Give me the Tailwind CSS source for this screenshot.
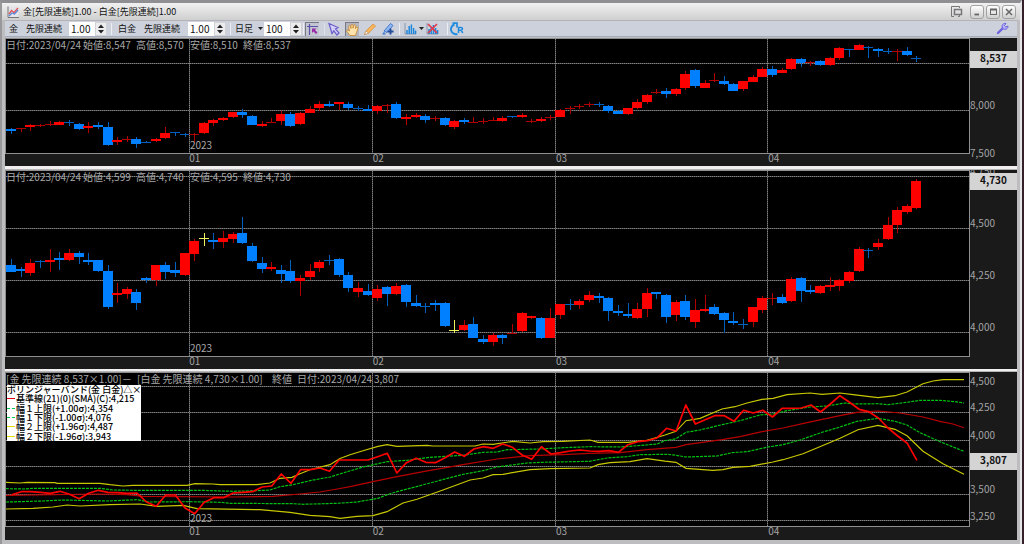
<!DOCTYPE html>
<html lang="ja">
<head>
  <meta charset="UTF-8">
  <title>金[先限連続]1.00 - 白金[先限連続]1.00</title>
  <meta name="viewport" content="width=device-width, initial-scale=1.0">
  <script src="https://cdn.jsdelivr.net/npm/@tailwindcss/browser@4"></script>
</head>
<body class="bg-[#35202a] min-h-screen pr-[2px] font-['Noto_Sans_CJK_JP',sans-serif] text-[10px] leading-[12px]">

  <div class="min-h-screen flex flex-col bg-[#bdbdc0] border-t-[3px] border-t-[#8e8e93] border-l-2 border-l-[#98989a] border-r-2 border-r-[#e6e6e8] pl-[3px] pr-[3px]">

    <!-- title bar -->
    <header class="h-[17px] -mx-[3px] pl-[5px] pr-1 flex items-center bg-linear-to-b from-[#f1f1f1] to-[#cfcfd0] text-[#111]">
      <svg class="w-3 h-3 mr-1" viewBox="0 0 12 12" fill="none">
        <rect x="0.5" y="0.5" width="11" height="11" fill="#e4e4e8" />
        <path d="M1 0.5V11.5H12" stroke="#777" />
        <path d="M2 8L4.500 4.500L7 6.500L11 2" stroke="#e0555c" stroke-width="1.300" />
        <path d="M2 10L5 7L7.500 8L11 4" stroke="#5b86d8" stroke-width="1.300" />
      </svg>
      <h1 class="text-[9px] whitespace-nowrap">金[先限連続]1.00 - 白金[先限連続]1.00</h1>
      <div class="ml-auto flex items-center gap-[2px]">
        <button aria-label="ウィンドウ切替" class="w-[14px] h-[14px] mr-1">
          <svg class="w-[14px] h-[14px]" viewBox="0 0 14 14" fill="none" stroke="#77777a">
            <path d="M9.500 3V1.500H1.500V11.500H4" /><path d="M8 11.500H9.500V10" /><rect x="4.500" y="4.500" width="7" height="5" stroke-width="1.500" />
          </svg>
        </button>
        <button aria-label="最小化" class="w-[14px] h-[14px] rounded-[3px] border border-[#a2a2a5] bg-linear-to-b from-white to-[#cfcfcf]">
          <svg class="w-3 h-3" viewBox="0 0 12 12"><path d="M3.500 8.500H8" stroke="#666" stroke-width="1.800" /></svg>
        </button>
        <button aria-label="最大化" class="w-[14px] h-[14px] rounded-[3px] border border-[#a2a2a5] bg-linear-to-b from-white to-[#cfcfcf]">
          <svg class="w-3 h-3" viewBox="0 0 12 12" fill="none" stroke="#666"><rect x="3.500" y="3.500" width="6" height="5" /><path d="M3 3.500H10" stroke-width="2" /></svg>
        </button>
        <button aria-label="閉じる" class="w-[14px] h-[14px] rounded-[3px] border border-[#a2a2a5] bg-linear-to-b from-white to-[#cfcfcf]">
          <svg class="w-3 h-3" viewBox="0 0 12 12"><path d="M3 3L9 9M9 3L3 9" stroke="#666" stroke-width="1.500" /></svg>
        </button>
      </div>
    </header>

    <!-- toolbar -->
    <div class="h-[17px] flex items-center bg-[#cdd1dc] border-t border-t-[#b4b4b8] border-b border-b-[#a3adbf] pl-1 pr-1 text-[9px] text-[#111] whitespace-nowrap">
      <label for="ratio1" class="flex w-[60px] gap-2"><span>金</span><span>先限連続</span></label>
      <div class="w-[38px] h-[14px] flex bg-white">
        <input id="ratio1" type="text" value="1.00" class="w-[26px] pl-[2px] text-[10px] leading-[14px]">
        <button aria-label="増減" class="w-3 bg-[#ececee] border border-[#d2d2d6] flex items-center justify-center">
          <svg class="w-2 h-3" viewBox="0 0 8 12"><path d="M4 1.500L7 5H1ZM4 10.500L7 7H1Z" fill="#222" /></svg>
        </button>
      </div>
      <div class="w-px h-3 mx-1 bg-[#eceef3]"></div>
      <label for="ratio2" class="flex w-[70px] gap-2 ml-[2px]"><span>白金</span><span>先限連続</span></label>
      <div class="w-[38px] h-[14px] flex bg-white">
        <input id="ratio2" type="text" value="1.00" class="w-[26px] pl-[2px] text-[10px] leading-[14px]">
        <button aria-label="増減" class="w-3 bg-[#ececee] border border-[#d2d2d6] flex items-center justify-center">
          <svg class="w-2 h-3" viewBox="0 0 8 12"><path d="M4 1.500L7 5H1ZM4 10.500L7 7H1Z" fill="#222" /></svg>
        </button>
      </div>
      <div class="w-px h-3 mx-1 bg-[#eceef3]"></div>
      <select aria-label="足種" class="appearance-none w-[22px] text-[9px] leading-[14px]"><option>日足</option></select>
      <svg class="w-[5px] h-[5px] mx-px" viewBox="0 0 5 5"><path d="M0 1H5L2.500 4Z" fill="#222" /></svg>
      <div class="w-[38px] h-[14px] flex bg-white">
        <input aria-label="本数" type="text" value="100" class="w-[26px] pl-[2px] text-[10px] leading-[14px]">
        <button aria-label="増減" class="w-3 bg-[#ececee] border border-[#d2d2d6] flex items-center justify-center">
          <svg class="w-2 h-3" viewBox="0 0 8 12"><path d="M4 1.500L7 5H1ZM4 10.500L7 7H1Z" fill="#222" /></svg>
        </button>
      </div>
      <div class="w-px h-3 mx-px bg-[#eceef3]"></div>
      <button aria-label="十字カーソル" class="w-[14px] h-[14px] bg-[#c3c6d0] border-t border-l border-[#777a84]">
        <svg class="w-[13px] h-[13px]" viewBox="0 0 13 13" fill="none">
          <path d="M1 3.500H12M3.500 1V12" stroke="#5a52a8" stroke-width="1.200" />
          <path d="M6 5.500H10.500L9 7L11.500 9.500L10 11L7.500 8.500L6 10Z" fill="#9a2aa8" />
        </svg>
      </button>
      <div class="w-px h-3 ml-[5px] mr-[2px] bg-[#dfe2ea]"></div>
      <button aria-label="選択" class="w-[14px] h-[14px]">
        <svg class="w-[14px] h-[14px]" viewBox="0 0 14 14"><path d="M2 1.500L11 5.500L8.500 7L12 11L10 13L6.800 8.800L5 11.500Z" fill="#d5d0fa" stroke="#6a5cc8" stroke-width="1.200" /></svg>
      </button>
      <button aria-label="移動" class="w-[14px] h-[14px] ml-1 bg-[#b2b5bd] border-t border-l border-[#777a84]">
        <svg class="w-[13px] h-[13px]" viewBox="0 0 13 13"><path d="M4 12.500L1 8.500Q0 6.500 2 7L3.500 8L2.500 3.500Q3 2 4.200 3.200L5 5.500V1.800Q6 0.300 7 1.800V5.200L8 2.200Q9.200 1.200 9.800 2.600L9.300 5.800L11 4Q12.400 3.800 12 5.300L10.500 9.500L9.500 12.500Z" fill="#ffe3ac" stroke="#c98d3b" stroke-width="0.900" /></svg>
      </button>
      <button aria-label="鉛筆" class="w-[14px] h-[14px] ml-1">
        <svg class="w-[14px] h-[14px]" viewBox="0 0 14 14"><path d="M1.500 12.500L3 9L10 2L12.500 4L5.500 11.200Z" fill="#f7b65c" stroke="#d9913a" stroke-width="0.800" /><path d="M1.500 12.500L3 9L5.500 11.200Z" fill="#fff" stroke="#b98850" stroke-width="0.600" /></svg>
      </button>
      <button aria-label="ペン追加" class="w-[14px] h-[14px] ml-1">
        <svg class="w-[14px] h-[14px]" viewBox="0 0 14 14"><path d="M3 9L9.500 1.500L12 3.500L6 10.500Z" fill="#8db8f2" stroke="#3b6fc8" stroke-width="0.900" /><path d="M1 12.500H5L3 9.500Z" fill="#4a7fd0" /><path d="M9.500 6.500V12.500M6.500 9.500H12.500" stroke="#244d9c" stroke-width="1.900" /></svg>
      </button>
      <div class="w-px h-3 mx-1 bg-[#eceef3]"></div>
      <button aria-label="テクニカル" class="h-[14px] flex items-center">
        <svg class="w-[13px] h-[13px]" viewBox="0 0 13 13"><path d="M1 1V12H12" fill="none" stroke="#8b95a8" /><path d="M3 12V8M5.200 12V4M7.400 12V2.500M9.600 12V6M11.600 12V8.500" stroke="#1d86dd" stroke-width="1.500" /></svg>
        <svg class="w-[5px] h-[5px] ml-[2px]" viewBox="0 0 5 5"><path d="M0 1H5L2.500 4Z" fill="#222" /></svg>
      </button>
      <button aria-label="テクニカル削除" class="w-[13px] h-[14px] ml-[2px]">
        <svg class="w-[13px] h-[13px]" viewBox="0 0 13 13"><path d="M1 1V12H12" fill="none" stroke="#8b95a8" /><path d="M3 12V7M5.200 12V5M7.400 12V3M9.600 12V6M11.600 12V8" stroke="#1d86dd" stroke-width="1.500" /><path d="M2 2L11 11M11 2L2 11" stroke="#e0394a" stroke-width="1.700" /></svg>
      </button>
      <div class="w-px h-3 ml-2 mr-[2px] bg-[#eceef3]"></div>
      <button aria-label="更新" class="w-[14px] h-[14px]">
        <svg class="w-[14px] h-[14px]" viewBox="0 0 14 14" fill="none" stroke="#1f8be0"><path d="M4.500 2.500A4.800 4.800 0 0 0 7.500 12" stroke-width="1.900" /><path d="M2.500 1.200H7V5.500" stroke-width="1.700" /><path d="M8.500 11V5.500H11Q12.500 5.500 12.500 6.800T11 8.200H9M11 8.200L12.800 11" stroke-width="1.500" /></svg>
      </button>
      <button aria-label="設定" class="w-[13px] h-[14px] ml-auto mr-1">
        <svg class="w-[13px] h-[13px]" viewBox="0 0 13 13"><path d="M2 11L7 6" stroke="#6b62e0" stroke-width="2.400" stroke-linecap="round" /><path d="M10 1.500A3 3 0 1 0 12 4L9.800 5L8.300 3.600Z" fill="#b9b3f8" stroke="#6b62e0" stroke-width="1" /></svg>
      </button>
    </div>

    <main class="pt-px flex flex-col text-[#a8a8a8]">

      <!-- gold -->
      <section class="grid grid-cols-[minmax(0,1fr)_47px] bg-[#1a1a1a]">
        <div class="relative h-[116px] bg-black border border-[#8f8f8f]">
          <svg id="gold" class="block w-full h-full" viewBox="6 39 963 114" preserveAspectRatio="none"></svg>
          <div class="absolute left-0 top-0 flex whitespace-nowrap">
            <span class="w-[77px]">日付:2023/04/24</span><span class="w-[53px]">始値:8,547</span><span class="w-[54px]">高値:8,570</span><span class="w-[53px]">安値:8,510</span><span>終値:8,537</span>
          </div>
          <span class="absolute left-[19.1%] bottom-[2px]">2023</span>
        </div>
        <svg class="w-[47px] h-[128px] row-span-2 overflow-visible fill-[#a4a4a4]">
          <text x="0" y="71">8,000</text><text x="0" y="119">7,500</text>
          <rect x="0" y="13" width="47" height="17" fill="#d4d4d4" />
          <text x="10" y="24" class="fill-[#111] font-bold">8,537</text>
        </svg>
        <svg class="months w-full h-3 overflow-visible fill-[#a4a4a4]"></svg>
      </section>

      <div class="h-1 bg-[#f1eff0] border-b border-b-[#b5b5b8]"></div>

      <!-- platinum -->
      <section class="grid grid-cols-[minmax(0,1fr)_47px] bg-[#1a1a1a]">
        <div class="relative h-[187px] bg-black border border-[#8f8f8f]">
          <svg id="platinum" class="block w-full h-full" viewBox="6 171 963 185" preserveAspectRatio="none"></svg>
          <div class="absolute left-0 top-0 flex whitespace-nowrap">
            <span class="w-[77px]">日付:2023/04/24</span><span class="w-[53px]">始値:4,599</span><span class="w-[54px]">高値:4,740</span><span class="w-[53px]">安値:4,595</span><span>終値:4,730</span>
          </div>
          <span class="absolute left-[19.1%] bottom-[2px]">2023</span>
        </div>
        <svg class="w-[47px] h-[199px] row-span-2 fill-[#a4a4a4]">
          <text x="0" y="5">4,750</text><text x="0" y="57">4,500</text><text x="0" y="109">4,250</text><text x="0" y="161">4,000</text>
          <rect x="0" y="3" width="47" height="17" fill="#d4d4d4" />
          <text x="10" y="14" class="fill-[#111] font-bold">4,730</text>
        </svg>
        <svg class="months w-full h-3 overflow-visible fill-[#a4a4a4]"></svg>
      </section>

      <div class="h-[3px] bg-[#f1eff0] border-b border-b-[#b5b5b8]"></div>

      <!-- spread with bollinger bands -->
      <section class="grid grid-cols-[minmax(0,1fr)_47px] bg-[#1a1a1a]">
        <div class="relative h-[155px] bg-black border border-[#8f8f8f]">
          <svg id="spread" class="block w-full h-full" viewBox="6 373 963 153" preserveAspectRatio="none"></svg>
          <div class="absolute left-0 top-0 flex whitespace-nowrap">
            <span class="w-[131px]">[金 先限連続 8,537×1.00]－</span><span class="w-[135px]">[白金 先限連続 4,730×1.00]</span><span class="w-[25px]">終値</span><span class="w-[77px]">日付:2023/04/24</span><span>3,807</span>
          </div>
          <div class="absolute left-px top-3 w-[134px] h-[56px] bg-white text-black text-[9px] leading-[9px] font-medium grid grid-rows-6 items-center whitespace-nowrap">
            <div>ボリンジャーバンド(金 白金)△×</div>
            <div class="flex items-center gap-px"><i class="w-2 h-px bg-red-600"></i>基準線(21)(0)(SMA)(C):4,215</div>
            <div class="flex items-center gap-px"><i class="w-2 border-t border-dashed border-green-500"></i>幅１上限(+1.00σ):4,354</div>
            <div class="flex items-center gap-px"><i class="w-2 border-t border-dashed border-green-500"></i>幅１下限(-1.00σ):4,076</div>
            <div class="flex items-center gap-px"><i class="w-2 h-px bg-[#e0e000]"></i>幅２上限(+1.96σ):4,487</div>
            <div class="flex items-center gap-px"><i class="w-2 h-px bg-[#e0e000]"></i>幅２下限(-1.96σ):3,943</div>
          </div>
          <span class="absolute left-[19.1%] bottom-[2px]">2023</span>
        </div>
        <svg class="w-[47px] h-[168px] row-span-2 fill-[#a4a4a4]">
          <text x="0" y="13">4,500</text><text x="0" y="39">4,250</text><text x="0" y="67">4,000</text><text x="0" y="121">3,500</text><text x="0" y="148">3,250</text>
          <rect x="0" y="81" width="47" height="17" fill="#d4d4d4" />
          <text x="10" y="92" class="fill-[#111] font-bold">3,807</text>
        </svg>
        <svg class="months w-full h-[13px] overflow-visible fill-[#a4a4a4]"></svg>
      </section>
    </main>
  </div>

  <script>
    const NS = "http://www.w3.org/2000/svg";
    const FIRST_X = 11.7, STEP = 9.63;
    const COLORS = { R: "#ff0000", B: "#0080ff", Y: "#f0f060" };
    const WICKS = { R: "#b00000", B: "#0060c0", Y: "#f0f060" };

    // color, body top, body bottom, wick top, wick bottom
    const gold = `B129,131,128,134 R128,129,128,132 R125,127,124,131 R125,126,124,127 R124,125,121,126 R122,125,121,125 B122,123,120,126 B124,129,123,130 R126,128,122,133 B125,127,122,129
      B127,145,122,146 R140,142,137,145 R139,140,136,142 B139,144,137,148 B142,143,141,143 R139,141,138,142 R133,138,127,139 B132,133,132,136 B134,135,133,137 R134,135,133,144
      R123,133,122,134 R120,123,119,126 R118,120,117,121 R112,117,112,118 B112,115,109,118 B116,125,115,125 R124,126,121,127 R122,123,118,123 R114,121,111,125 B114,126,112,127
      R113,124,112,125 R109,113,106,113 R104,108,101,111 B104,106,101,107 R102,104,102,110 B104,108,102,110 B108,109,106,111 B109,111,105,111 R106,111,105,114 R105,106,104,113
      B104,118,102,119 R117,119,114,125 R115,117,113,118 B116,120,114,123 R118,119,116,121 B118,125,117,126 R121,127,120,129 B120,122,118,124 R122,123,117,123 R121,122,118,124
      R120,121,117,121 R118,121,116,122 B116,117,116,118 R115,117,113,118 R121,122,119,123 R119,121,117,122 R117,118,115,120 R110,117,109,117 R108,109,106,114 R106,107,104,109
      R104,105,102,107 B104,105,102,107 B106,111,105,113 B111,114,110,114 R108,114,108,115 R102,108,99,109 R95,102,94,104 R92,93,89,94 B91,94,88,98 R89,94,88,96
      R74,88,71,90 B70,86,69,88 R83,88,80,88 R80,81,73,82 B81,84,76,85 B84,91,83,91 R81,89,81,91 R77,82,75,82 R69,77,67,77 B69,75,66,77
      R70,73,68,73 R59,69,58,70 B59,63,58,67 R62,63,61,66 B61,65,60,66 R58,65,57,66 R48,58,47,60 B49,50,49,57 R45,50,44,50 B47,48,46,58
      B49,51,48,57 B51,52,48,54 R51,52,49,61 B51,55,47,56 B58,59,56,62`;

    const platinum = `B265,272,259,272 B269,271,267,277 R263,273,259,276 B261,262,260,268 R260,262,249,272 B258,260,252,270 R253,260,249,261 B253,257,251,264 B260,262,253,265 B260,271,260,272
      B271,307,265,309 R293,295,283,303 R289,294,287,299 B292,303,289,310 B278,280,277,283 R265,280,265,286 B265,272,262,279 B270,273,262,277 R253,275,253,276 R241,254,239,261
      Y238,239,233,246 B240,242,233,249 R238,242,231,248 R234,239,232,243 B233,243,217,244 B246,261,243,262 B263,269,257,273 R267,269,262,271 B270,274,265,283 B271,281,260,283
      R278,281,275,296 R271,277,264,280 R262,268,260,272 B260,261,255,265 B259,275,258,277 B275,288,272,292 R288,292,282,297 B291,295,284,296 R289,298,285,301 B287,294,286,306
      R286,294,283,295 B285,302,284,307 B303,306,295,307 B306,307,303,313 B303,305,300,311 B303,326,302,327 Y330,331,320,333 R325,330,320,331 B324,338,317,338 B339,342,335,344
      R335,342,333,346 B335,338,334,344 R333,334,324,334 R313,331,312,332 R316,318,316,319 B318,338,317,339 R318,338,308,338 R304,315,304,319 B304,305,299,310 R301,305,299,309
      R295,300,291,302 B296,298,293,303 B298,311,297,321 B311,313,305,316 B314,316,303,318 R309,318,303,319 R293,309,288,317 B292,294,292,299 B295,317,294,323 R302,315,300,321
      B301,317,295,320 R310,322,299,328 R309,311,295,312 B307,314,304,315 B313,320,312,333 B321,323,312,325 B324,325,319,329 R307,322,307,327 R298,310,296,313 R298,299,293,305
      B297,303,294,304 R279,301,277,302 B278,291,277,302 B290,292,285,294 R286,293,285,294 R285,287,277,291 R280,286,279,291 R272,281,271,283 R249,271,247,272 B250,251,248,258
      R243,247,239,250 R225,239,217,240 R210,225,207,233 R206,212,204,214 R181,208,179,209`;

    const spread = [494.7,491.7,491.7,492.3,493.3,491.3,494.3,498.7,493.3,490.3,492.3,492.7,493.3,493,502,506.3,495,495,508,513.7,
      502.3,497.7,497.7,493,492.3,491.7,487,486,474,483.3,469.7,469.7,468,471.3,460,460,460,460,456.7,453.3,
      473,462.7,458.3,462.3,462.7,457.7,452,456.3,449,446.7,448.3,444,447.3,455,459.3,446.7,454,452.7,451,450,
      451,451.3,450.7,452.3,444.7,441.7,440.7,438,428.3,431,405,424,419.7,415.7,415.7,421.3,410.3,413,410.3,417,
      408.3,408.3,408,405,412,404,395.7,402.3,409.3,411.7,418,428,436,443.3,460.3];

    const bands = [
      { color: "#c8c800", points: "6,482.3 20,483 27,482.3 55,482.7 57,483.3 100,483.3 110,484.7 123,486 133,485.3 187,485.3 195,483.7 213,484 220,484.7 257,484.7 270,483 280,478.3 292,477.3 300,473.7 310,469.7 330,464.7 340,458.5 350,454.7 363,450.7 378,446.3 387,444.7 397,446.3 427,445.3 433,446 475,446 483,444 493,444.3 513,441.3 530,443 543,441.7 563,441.3 590,440 598,442.3 628,442.3 647,440.3 665,435 676,431.3 686,420.7 700,418.3 722,409 735,406.7 747,403 762,399.3 773,398.3 787,394.7 810,393 822,394.3 840,393 853,394.7 878,397.7 895,395.7 907,392 923,383.7 933,381 943,379.7 964,379.7" },
      { color: "#c8c800", points: "6,509 33,508.3 53,507 67,505 80,506 110,504.7 140,504 157,506.3 183,505.3 197,508.7 260,509.7 290,512.3 310,515.3 330,516.7 340,518.3 357,516.3 373,515.7 387,511.7 403,503 417,499.3 443,490 470,480 483,478 493,474.7 503,474.3 530,469.7 550,468.7 590,468 598,464.7 610,462.7 630,461.7 647,458.7 665,461.2 676,462.3 686,468.3 713,470.3 723,469.7 733,467.3 750,466.3 773,462 783,459.7 803,453.7 827,443.7 840,438.3 858,429.7 878,425.3 895,429.3 907,435.7 923,451.3 943,463.7 964,474.3" },
      { color: "#00c010", dash: "3 1", points: "6,488.7 23,489 33,488.3 100,488.3 113,490 133,490.3 200,490.3 233,491.3 257,490.7 270,490 280,486.7 293,484.7 310,480.7 330,477 343,473 363,467 387,461.7 407,460.3 430,457.3 463,455.3 483,452.3 497,452 507,449.7 540,449 563,447.7 590,446.7 620,447 640,445.5 657,444 665,440.7 676,438.7 686,432.3 700,430 722,424.7 740,420.7 760,415 773,414 787,410.7 810,407 827,406 845,403 853,404 878,403.7 888,404.7 907,402.3 920,400.3 940,400.3 955,401.7 964,403" },
      { color: "#00c010", dash: "3 1", points: "6,502 43,501 63,500 107,501 137,499.7 150,502 190,501.7 220,502.3 230,503.3 293,503.7 303,504.3 337,503.3 357,502 378,498.3 390,493.7 397,491.7 430,483 463,474.3 483,470.7 497,467 527,463 543,462.3 590,461.3 607,458 627,456.7 640,454.7 667,454.3 676,455.3 686,457 717,456 732,452.7 747,451.7 768,447 783,444.7 800,440 823,432 840,427 857,421.3 878,418.3 895,421.3 907,425 920,432.7 940,441.7 964,451.3" },
      { color: "#b80000", points: "6,495.3 100,494 127,494.7 143,496.3 233,497 273,496.3 300,494 320,492 340,488.5 350,486.7 373,481.7 397,476.7 430,470.3 463,464.7 497,459 530,455.7 563,454.7 590,453.3 620,452.7 647,449.7 676,447.3 686,444.7 722,439.7 740,436.7 762,431.7 783,428 807,422.7 840,415.7 857,412.3 878,411 900,413 923,417 940,421.3 953,424 964,427.7" }
    ];

    function add(parent, tag, attrs) {
      const el = document.createElementNS(NS, tag);
      for (const key in attrs) el.setAttribute(key, attrs[key]);
      parent.appendChild(el);
      return el;
    }

    // solid dim line with brighter dots over it
    function gridLine(svg, x1, y1, x2, y2) {
      add(svg, "line", { x1, y1, x2, y2, stroke: "#484848", "shape-rendering": "crispEdges" });
      add(svg, "line", { x1, y1, x2, y2, stroke: "#848484", "stroke-dasharray": "1 1", "shape-rendering": "crispEdges" });
    }

    function drawGrid(svg, rows) {
      const { x, y, width, height } = svg.viewBox.baseVal;
      rows.forEach(r => gridLine(svg, x, r + 0.5, x + width, r + 0.5));
      [189, 372, 555, 767].forEach(c => gridLine(svg, c + 0.5, y, c + 0.5, y + height));
    }

    function drawCandles(svg, data) {
      data.trim().split(/\s+/).forEach((item, i) => {
        const kind = item[0];
        const [top, bottom, high, low] = item.slice(1).split(",").map(Number);
        const center = Math.floor(FIRST_X + STEP * i);
        const thin = bottom - top === 1;
        add(svg, "rect", { x: center, y: high, width: 1, height: low - high, fill: WICKS[kind] });
        add(svg, "rect", { x: center - 5, y: top, width: 10, height: bottom - top, fill: thin ? WICKS[kind] : COLORS[kind] });
      });
    }

    const goldSvg = document.getElementById("gold");
    drawGrid(goldSvg, [63, 110]);
    drawCandles(goldSvg, gold);

    const platinumSvg = document.getElementById("platinum");
    drawGrid(platinumSvg, [176, 228, 280, 332]);
    drawCandles(platinumSvg, platinum);

    const spreadSvg = document.getElementById("spread");
    drawGrid(spreadSvg, [386, 412, 440, 466, 494, 520]);
    bands.forEach(b => add(spreadSvg, "polyline", { points: b.points, fill: "none", stroke: b.color, "stroke-width": 1.2, "stroke-dasharray": b.dash || "none" }));
    add(spreadSvg, "polyline", {
      points: spread.map((v, i) => (FIRST_X + STEP * i).toFixed(1) + "," + v).join(" "),
      fill: "none", stroke: "#ff0000", "stroke-width": 1.7, "stroke-linejoin": "round"
    });

    document.querySelectorAll(".months").forEach(svg => {
      [["01", 19.1], ["02", 38.1], ["03", 57.1], ["04", 79.1]].forEach(([label, pos]) => {
        add(svg, "text", { x: pos + "%", y: 8 }).textContent = label;
      });
    });
  </script>
</body>
</html>
